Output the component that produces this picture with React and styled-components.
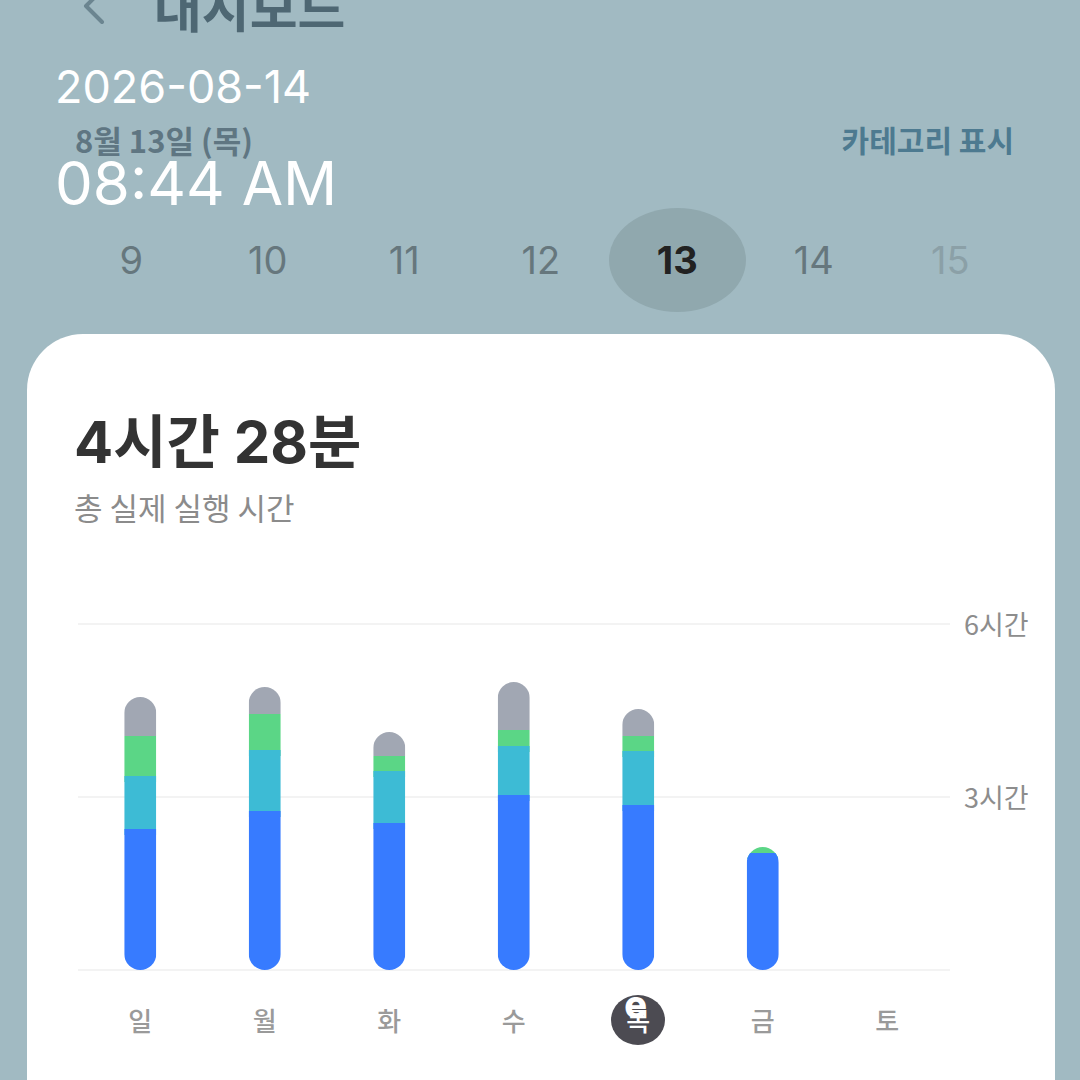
import React from 'react'
import styled, { createGlobalStyle } from 'styled-components'

const GlobalStyle = createGlobalStyle`
  html, body {
    margin: 0;
    padding: 0;
    background: #a1bac2;
    overflow: hidden;
  }
  body {
    font-family: Inter, "Noto Sans CJK KR", sans-serif;
  }
`

const COLORS = {
  blue: '#377bff',
  cyan: '#3dbbd5',
  green: '#5bd686',
  grey: '#a1a7b3',
}

// page y of each segment boundary: top, grey->green, green->cyan, cyan->blue
const bars = [
  { top: 698, green: 737, cyan: 777, blue: 830 },
  { top: 688, green: 715, cyan: 751, blue: 812 },
  { top: 733, green: 757, cyan: 772, blue: 824 },
  { top: 683, green: 731, cyan: 747, blue: 796 },
  { top: 710, green: 737, cyan: 752, blue: 806 },
  { top: 848, green: 848, cyan: 854, blue: 854 },
]

const days = ['일', '월', '화', '수', '목', '금', '토']
const dates = [9, 10, 11, 12, 13, 14, 15]

const PLOT_TOP = 600
const PLOT_H = 375
const BASE = 371
const CELL = 124.5

function Chart() {
  return (
    <svg width="872" height={PLOT_H} viewBox={`0 0 872 ${PLOT_H}`}>
      <defs>
        {bars.map((b, i) => {
          const x = CELL * i + CELL / 2 - 16
          const top = b.top - PLOT_TOP
          return (
            <clipPath id={`bar${i}`} key={i}>
              <rect x={x} y={top} width="32" height={BASE - top} rx="16" />
            </clipPath>
          )
        })}
      </defs>
      <line x1="0" x2="872" y1="25" y2="25" stroke="#efefef" strokeWidth="1.5" />
      <line x1="0" x2="872" y1="198" y2="198" stroke="#efefef" strokeWidth="1.5" />
      <line x1="0" x2="872" y1={BASE} y2={BASE} stroke="#efefef" strokeWidth="1.5" />
      {bars.map((b, i) => {
        const x = CELL * i + CELL / 2 - 16
        const y = (v) => v - PLOT_TOP
        return (
          <g clipPath={`url(#bar${i})`} key={i}>
            <rect x={x} y={y(b.top)} width="32" height={y(b.green) - y(b.top)} fill={COLORS.grey} />
            <rect x={x} y={y(b.green)} width="32" height={y(b.cyan) - y(b.green) + 6} fill={COLORS.green} />
            <rect x={x} y={y(b.cyan)} width="32" height={y(b.blue) - y(b.cyan) + 6} fill={COLORS.cyan} />
            <rect x={x} y={y(b.blue)} width="32" height={BASE - y(b.blue)} fill={COLORS.blue} />
          </g>
        )
      })}
    </svg>
  )
}

export default function App() {
  return (
    <>
      <GlobalStyle />
      <Page>
        <TitleBar>
          <Back>
            <svg width="30" height="40" viewBox="0 0 30 40">
              <path d="M24 4 L8 20 L24 36" fill="none" stroke="#6b8590" strokeWidth="4" strokeLinecap="round" strokeLinejoin="round" />
            </svg>
          </Back>
          <Title>대시보드</Title>
        </TitleBar>

        <DateRow>
          <DateLabel>8월 13일 (목)</DateLabel>
          <CategoryToggle>카테고리 표시</CategoryToggle>
        </DateRow>

        <DateStrip>
          {dates.map((d) => (
            <DateCell key={d} $active={d === 13} $faded={d === 15}>
              {d}
            </DateCell>
          ))}
        </DateStrip>

        <Card>
          <Total>4시간 28분</Total>
          <Caption>총 실제 실행 시간</Caption>

          <ChartRow>
            <Chart />
            <Axis>
              <AxisLabel>6시간</AxisLabel>
              <AxisLabel>3시간</AxisLabel>
            </Axis>
          </ChartRow>

          <DayRow>
            {days.map((d) => (
              <DayCell key={d}>
                {d === '목' ? (
                  <TodayBadge>
                    {d}
                    <Glitch>e</Glitch>
                  </TodayBadge>
                ) : (
                  d
                )}
              </DayCell>
            ))}
          </DayRow>
        </Card>

        <Stamp>
          <StampDate>2026-08-14</StampDate>
          <StampTime>08:44 AM</StampTime>
        </Stamp>
      </Page>
    </>
  )
}

const Page = styled.div`
  position: relative;
  width: 1080px;
  height: 1080px;
  overflow: hidden;
  display: flex;
  flex-direction: column;
`

const TitleBar = styled.div`
  display: flex;
  align-items: center;
  height: 56px;
  margin-top: -22px;
  padding-left: 78px;
  gap: 46px;
`

const Back = styled.div`
  display: flex;
  align-items: center;
`

const Title = styled.h1`
  margin: 0;
  font-family: "Noto Sans CJK KR", sans-serif;
  font-size: 52px;
  font-weight: 700;
  color: #4e6773;
  line-height: 1;
`

const DateRow = styled.div`
  display: flex;
  justify-content: space-between;
  align-items: center;
  padding: 0 66px 0 75px;
  margin-top: 85px;
  height: 40px;
`

const DateLabel = styled.div`
  font-family: "Noto Sans CJK KR", sans-serif;
  font-size: 31px;
  font-weight: 700;
  color: #5f7682;
`

const CategoryToggle = styled.div`
  font-family: "Noto Sans CJK KR", sans-serif;
  font-size: 30px;
  font-weight: 700;
  color: #4d7a90;
`

const DateStrip = styled.div`
  display: grid;
  grid-template-columns: repeat(7, 136.5px);
  padding-left: 63px;
  margin-top: 49px;
  height: 104px;
`

const DateCell = styled.div`
  display: flex;
  align-items: center;
  justify-content: center;
  border-radius: 50%;
  font-family: Inter, sans-serif;
  font-size: 38px;
  font-weight: ${(p) => (p.$active ? 700 : 400)};
  color: ${(p) => (p.$active ? '#222' : p.$faded ? '#8ba0a7' : '#66777d')};
  background: ${(p) => (p.$active ? '#90a8ae' : 'transparent')};
`

const Card = styled.div`
  flex: 1;
  margin: 22px 25px 0 27px;
  background: #fff;
  border-radius: 56px 56px 0 0;
  padding: 74px 0 0 51px;
  display: flex;
  flex-direction: column;
`

const Total = styled.div`
  font-family: Inter, "Noto Sans CJK KR", sans-serif;
  font-size: 58px;
  font-weight: 700;
  color: #333;
  line-height: 1.2;
  margin-left: -4px;
`

const Caption = styled.div`
  font-family: "Noto Sans CJK KR", sans-serif;
  font-size: 31px;
  color: #8b8b8b;
  margin-top: 6px;
  margin-left: -4px;
`

const ChartRow = styled.div`
  display: flex;
  margin-top: 70px;
  gap: 14px;
`

const Axis = styled.div`
  display: flex;
  flex-direction: column;
  padding-top: 9px;
  gap: 141px;
`

const AxisLabel = styled.div`
  font-family: "Noto Sans CJK KR", sans-serif;
  font-size: 27px;
  line-height: 32px;
  color: #8d8d8d;
`

const DayRow = styled.div`
  display: grid;
  grid-template-columns: repeat(7, 124.5px);
  margin-top: 20px;
  height: 52px;
`

const DayCell = styled.div`
  display: flex;
  align-items: center;
  justify-content: center;
  font-family: "Noto Sans CJK KR", sans-serif;
  font-size: 26px;
  font-weight: 500;
  color: #9a9a9a;
`

const TodayBadge = styled.div`
  position: relative;
  width: 54px;
  height: 50px;
  border-radius: 50%;
  background: #4c4b52;
  color: #fff;
  display: flex;
  align-items: center;
  justify-content: center;
`

const Glitch = styled.span`
  position: absolute;
  top: -14px;
  left: 13px;
  font-family: Inter, sans-serif;
  font-size: 38px;
  font-weight: 800;
  color: #fff;
`

const Stamp = styled.div`
  position: absolute;
  left: 55px;
  top: 64px;
  color: #fff;
  font-family: Inter, sans-serif;
  line-height: 1;
`

const StampDate = styled.div`
  font-size: 45px;
`

const StampTime = styled.div`
  font-size: 60px;
  margin-top: 44px;
`
